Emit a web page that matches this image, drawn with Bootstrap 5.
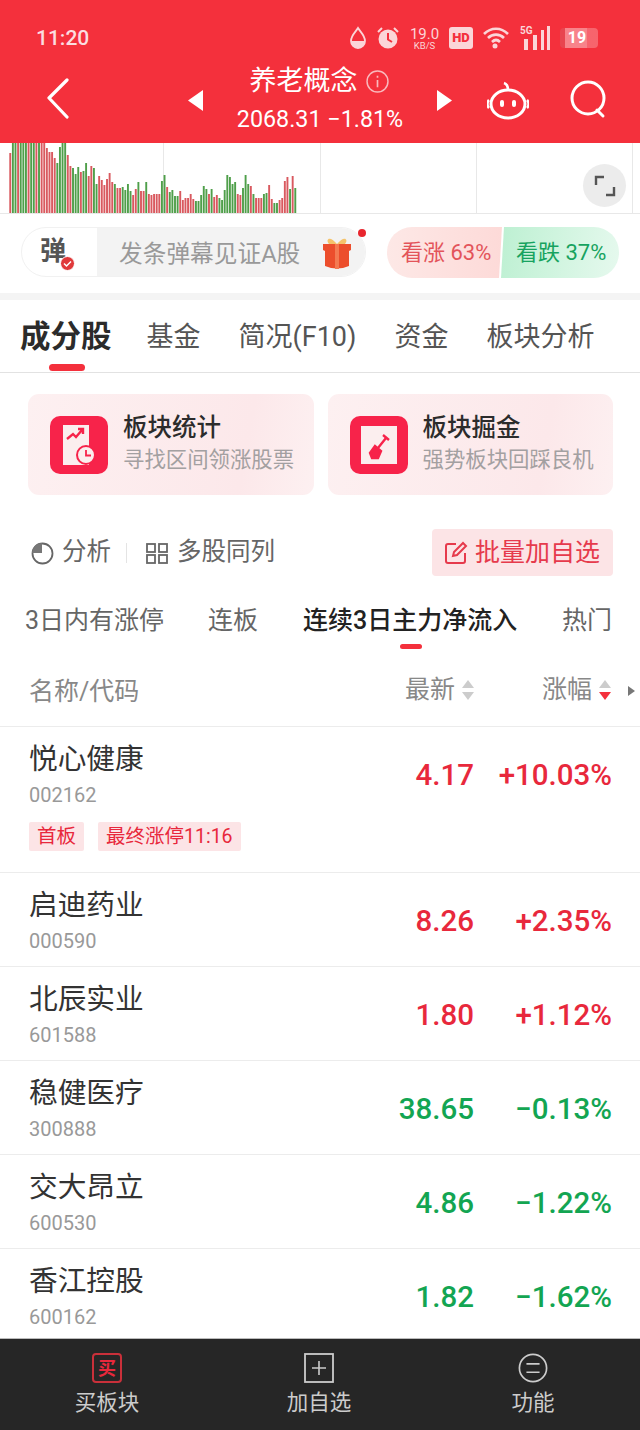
<!DOCTYPE html>
<html lang="zh"><head><meta charset="utf-8">
<link href="https://cdn.jsdelivr.net/npm/bootstrap@5.3.0/dist/css/bootstrap.min.css" rel="stylesheet">
<style>
html,body{width:640px;height:1430px;overflow:hidden;background:#fff}
body{font-family:Roboto,"Noto Sans CJK SC",sans-serif;color:#222}
.shell{width:640px;height:1430px;position:relative}
.topbar{background:#f4303c;height:143px;color:#fff}
.stat{height:62px;padding:14px 42px 0 36px}
.clock{font-size:21px;font-weight:500;color:#fbdde0;line-height:48px}
.stat-ic{gap:9px;color:#fbd5d8;height:48px}
.netsp{font-size:15px;line-height:13px;text-align:center;width:31px;color:#fbd5d8;margin-top:1px}
.netsp small{display:block;font-size:9.500px;line-height:9px}
.hd{background:#fbd5d8;color:#f4303c;font-size:13px;font-weight:900;border-radius:3px;width:24px;height:22px;line-height:22px;text-align:center}
.batt{width:38px;height:20px;border-radius:4px;background:linear-gradient(90deg,#e8454f 12%,rgba(255,255,255,.4) 12%,rgba(255,255,255,.4) 70%,rgba(255,255,255,.25) 70%);font-size:16px;font-weight:700;text-align:center;line-height:20px;color:#fff;padding-right:4px}
.nav-line{height:81px;padding:0 30px 0 46px}
.ctitle{width:232px}
.ctitle-a{font-size:27px;line-height:34px;height:34px;margin-top:2px;padding-right:2px}
.ctitle-b{font-size:23.300px;line-height:32px;margin-top:5px;white-space:nowrap}
.chartbox{height:71px;border-bottom:1px solid #e8e8e8;overflow:hidden;position:relative}
.fsbtn{position:absolute;left:583px;top:21px;width:43px;height:43px;border-radius:50%;background:#ececec}
.dan{height:79px;padding:13px 21px 0 21px}
.danbox{width:345px;height:50px;border-radius:25px;border:1px solid #f1f1f1;position:relative;background:#fff}
.dan-l{width:75px;font-size:26px;font-weight:700;color:#555;padding-left:18px;line-height:46px;position:relative}
.dan-r{flex:1;background:#f3f3f3;border-radius:0 25px 25px 0;color:#999;font-size:23.700px;padding-left:22px;line-height:52px;white-space:nowrap}
.dotred{position:absolute;left:336px;top:1px;width:8px;height:8px;border-radius:50%;background:#e8262e}
.gift{position:absolute;left:299px;top:7px}
.votebox{width:232px;height:51px;margin-left:21px;border-radius:25px;overflow:hidden;font-size:22px;line-height:51px;white-space:nowrap}
.vote-up{background:linear-gradient(90deg,#fde8e6,#fddad8);color:#e3545a;width:115px;padding-left:14px;clip-path:polygon(0 0,100% 0,calc(100% - 3px) 100%,0 100%)}
.vote-dn{background:linear-gradient(100deg,#bdf0d2,#e6f9ee);color:#17a35f;flex:1;padding-left:15px;margin-left:-1px;clip-path:polygon(3px 0,100% 0,100% 100%,0 100%)}
.thick{height:7px;background:#f4f4f4}
.tabs{height:73px;border-bottom:1px solid #e2e2e2;padding-left:20px;position:relative;white-space:nowrap;overflow:hidden}
.tb{font-size:27px;color:#555;line-height:74px;margin-right:38px}
.tb.on{font-size:30.500px;font-weight:700;color:#2b2b2b;margin-right:35px}
.tb.fade{color:#e2e2e2;margin-right:0}
.tabmark{position:absolute;left:49px;top:64px;width:36px;height:7px;border-radius:4px;background:#f4303c}
.cards{padding:21px 27px 0 28px;gap:14px}
.promo{flex:1;height:101px;border-radius:11px;background:linear-gradient(100deg,#fdf0f1,#fce8ea 75%,#fdf0f1);padding:22px 0 0 22px;gap:15px}
.promo-ic{width:58px;height:58px;border-radius:10px;background:#f7234a;display:flex;align-items:center;justify-content:center}
.promo-t{font-size:24.500px;line-height:28px;color:#2c2c2c;font-weight:500;white-space:nowrap;margin-top:-2px}
.promo-s{font-size:21.400px;line-height:28px;color:#a3a0a1;margin-top:4px;white-space:nowrap}
.tools{height:47px;margin-top:34px;padding:0 27px 0 30px;font-size:24.500px;color:#666}
.tools-sep{width:1px;height:20px;background:#e4e4e4;margin:0 18px 0 15px}
.addbtn{height:47px;width:181px;background:#fce4e6;border-radius:4px;color:#e63a4c;font-size:25px;padding-left:11px;gap:6px;white-space:nowrap}
.sub{height:60px;position:relative;font-size:25px;color:#666;white-space:nowrap;margin-top:15px;line-height:60px}
.sub span{position:absolute;top:0}
.submark{position:absolute;left:400px;top:53px;width:22px;height:5px;border-radius:3px;background:#f4303c}
.thd{height:76px;padding:6px 8px 0 29px;border-bottom:1px solid #ececec;color:#888;font-size:25px;position:relative}
.rw{padding:0 28px 0 29px;border-bottom:1px solid #ececec;height:94px;position:relative}
.rw.tall{height:146px}
.rw-a{font-size:28.700px;line-height:40px;color:#333;padding-top:12px;height:52px}
.rw-b{font-size:20px;line-height:24px;color:#999;margin-top:4px}
.vals{position:absolute;right:28px;top:1px;height:94px;font-size:29.500px;font-weight:500;display:flex;align-items:center;white-space:nowrap}
.pv{width:100px;text-align:right;margin-right:24px}
.cv{width:114px;text-align:right}
.up{color:#e8283c}.dn{color:#13a552}
.tags{gap:14px;margin-top:15px}
.tg{background:#fce4e6;color:#e8283c;font-size:19.500px;height:29px;line-height:29px;padding:0 8px;border-radius:2px}
.list{height:612px;overflow:hidden}
.foot{height:92px;background:#262626;border-top:1px solid #bbb;color:#ccc;font-size:21.500px;position:absolute;left:0;top:1338px;width:640px}
.foot-i{position:absolute;top:0;width:120px;text-align:center}
.foot-i svg{display:block;margin:14px auto 0;height:30px}
.foot-i div{line-height:30px;margin-top:5px}
</style></head>
<body><div class="shell">
<div class="topbar">
 <div class="stat d-flex justify-content-between align-items-start">
  <div class="clock">11:20</div>
  <div class="stat-ic d-flex align-items-center">
   <svg width="18" height="24" viewBox="0 0 17 24"><path d="M8.500 2C6 6 1.500 9.500 1.500 15a7 7 0 0 0 14 0C15.500 9.500 11 6 8.500 2z" fill="none" stroke="#fbd5d8" stroke-width="1.800"/><path d="M1.500 15h14a7 7 0 0 1-14 0z" fill="#fbd5d8"/></svg>
   <svg width="24" height="24" viewBox="0 0 24 24"><circle cx="12" cy="13" r="9.500" fill="#fbd5d8"/><path d="M12 7v6.500l4 2.500" fill="none" stroke="#f4303c" stroke-width="2"/><path d="M2 6l4-4M22 6l-4-4" stroke="#fbd5d8" stroke-width="2"/></svg>
   <div class="netsp">19.0<small>KB/S</small></div>
   <div class="hd">HD</div>
   <svg width="28" height="24" viewBox="0 0 28 24"><path d="M2 8c7-7 17-7 24 0M6 12c4.500-4.500 11.500-4.500 16 0M10 16c2.500-2.500 5.500-2.500 8 0" fill="none" stroke="#fbd5d8" stroke-width="2.600"/><circle cx="13" cy="20" r="2.500" fill="#fbd5d8"/></svg>
   <svg width="32" height="26" viewBox="0 0 30 26"><text x="0" y="9" font-size="10" font-weight="700" fill="#fbd5d8" font-family="Roboto">5G</text><path d="M4 14h4v11H4zM13 10h4v15h-4zM21 5h3v20h-3zM27 1h3v24h-3z" fill="#fbd5d8"/></svg>
   <div class="batt">19</div>
  </div>
 </div>
 <div class="nav-line d-flex align-items-start">
  <svg width="24" height="42" viewBox="0 0 24 42" class="mt-3"><path d="M21 2L3 20l18 19" fill="none" stroke="#fff" stroke-width="3.200" stroke-linecap="round" stroke-linejoin="round"/></svg>
  <svg width="16" height="22" viewBox="0 0 16 22" style="margin:28px 0 0 118px"><path d="M15 0v21L0 10.500z" fill="#fff"/></svg>
  <div class="ctitle text-center">
   <div class="ctitle-a d-flex justify-content-center align-items-center gap-2"><span>养老概念</span>
    <svg width="23" height="23" viewBox="0 0 22 22"><circle cx="11" cy="11" r="10" fill="none" stroke="#f9b9bd" stroke-width="1.400"/><path d="M11 9.500v7M11 5.500v2" stroke="#f9b9bd" stroke-width="1.600"/></svg></div>
   <div class="ctitle-b">2068.31 −1.81%</div>
  </div>
  <svg width="16" height="22" viewBox="0 0 16 22" style="margin-top:28px"><path d="M1 0v21l15-10.500z" fill="#fff"/></svg>
  <svg width="42" height="40" viewBox="0 0 42 40" style="margin:18px 0 0 35px"><ellipse cx="21" cy="24" rx="17" ry="14" fill="none" stroke="#fff" stroke-width="3"/><path d="M2 20a4 5 0 0 0 0 8M40 20a4 5 0 0 1 0 8M21 10c0-3-1-6-4-7" fill="none" stroke="#fff" stroke-width="2.600"/><rect x="13" y="20" width="4" height="7" rx="2" fill="#fff"/><rect x="25" y="20" width="4" height="7" rx="2" fill="#fff"/></svg>
  <svg width="38" height="40" viewBox="0 0 38 40" style="margin:18px 0 0 41px"><circle cx="18" cy="18" r="16" fill="none" stroke="#fff" stroke-width="3"/><path d="M27 30l6 6" stroke="#fff" stroke-width="3" stroke-linecap="round"/></svg>
 </div>
</div>
<div class="chartbox">
 <svg id="vol" width="640" height="71" viewBox="0 0 640 71" class="d-block"></svg>
 <div class="fsbtn d-flex align-items-center justify-content-center"><svg width="24" height="24" viewBox="0 0 24 24"><path d="M11 3H3v8M13 21h8v-8" fill="none" stroke="#555" stroke-width="2.400"/></svg></div>
</div>
<div class="dan d-flex">
 <div class="danbox d-flex">
  <div class="dan-l">弹<svg width="15" height="15" viewBox="0 0 15 15" class="position-absolute" style="left:38px;top:28px"><circle cx="7.500" cy="7.500" r="7" fill="#e0393a" stroke="#fff"/><path d="M4 7.500l2.500 2.500 4.500-4.500" fill="none" stroke="#fff" stroke-width="1.500"/></svg></div>
  <div class="dan-r">发条弹幕见证A股</div>
  <svg class="gift" width="32" height="36" viewBox="0 0 32 36"><path d="M16 9C9 0 4 4 8 9zM16 9c7-9 12-5 8 0z" fill="#f5c36b"/><path d="M2 9h28v6l-2 1v15q-12 5-24 0V16l-2-1z" fill="#ec4e2c"/><path d="M14 9h4v25h-4z" fill="#f47a52"/></svg>
  <div class="dotred"></div>
 </div>
 <div class="votebox d-flex">
  <div class="vote-up">看涨 63%</div><div class="vote-dn">看跌 37%</div>
 </div>
</div>
<div class="thick"></div>
<div class="tabs d-flex">
 <span class="tb on">成分股</span><span class="tb">基金</span><span class="tb">简况(F10)</span><span class="tb">资金</span><span class="tb">板块分析</span><span class="tb fade">相</span>
 <div class="tabmark"></div>
</div>
<div class="cards d-flex">
 <div class="promo d-flex">
  <div class="promo-ic"><svg width="34" height="40" viewBox="0 0 34 40"><path d="M0 0h26v40H0z" fill="#fbeeee" transform="translate(1 0)"/><path d="M5 14l6-5 3 3 6-7M16 4h5v5" fill="none" stroke="#f7234a" stroke-width="2.400"/><circle cx="24" cy="30" r="9" fill="#fbeeee" stroke="#f7234a" stroke-width="2"/><path d="M24 25v5.500h5" fill="none" stroke="#f7234a" stroke-width="1.800"/></svg></div>
  <div><div class="promo-t">板块统计</div><div class="promo-s">寻找区间领涨股票</div></div>
 </div>
 <div class="promo d-flex">
  <div class="promo-ic"><svg width="36" height="38" viewBox="0 0 36 38"><path d="M0 0h36v38H0z" fill="#fbeeee"/><path d="M9 27l5-7 6 5-3 7-6 0zM17 22l8-10" fill="#f7234a" stroke="#f7234a" stroke-width="2.400"/><path d="M22 9l6 5" stroke="#f7234a" stroke-width="2.400"/></svg></div>
  <div><div class="promo-t">板块掘金</div><div class="promo-s">强势板块回踩良机</div></div>
 </div>
</div>
<div class="tools d-flex align-items-center justify-content-between">
 <div class="d-flex align-items-center">
  <svg width="24" height="24" viewBox="0 0 24 24" class="me-2"><circle cx="12.500" cy="12.500" r="10" fill="none" stroke="#666" stroke-width="1.800"/><path d="M12 2A10 10 0 0 0 2 12h10z" fill="#777"/></svg>
  <span>分析</span><span class="tools-sep"></span>
  <svg width="24" height="24" viewBox="0 0 24 24" class="me-2"><g fill="none" stroke="#666" stroke-width="1.800"><rect x="2" y="3" width="8" height="8"/><rect x="14" y="3" width="8" height="8"/><rect x="2" y="14" width="8" height="8"/><rect x="14" y="14" width="8" height="8"/></g></svg>
  <span>多股同列</span>
 </div>
 <div class="addbtn d-flex align-items-center">
  <svg width="26" height="26" viewBox="0 0 26 26"><path d="M13 4H5a2 2 0 0 0-2 2v15a2 2 0 0 0 2 2h15a2 2 0 0 0 2-2v-8M10 16l1-4 9-9 3 3-9 9z" fill="none" stroke="#e63a4c" stroke-width="2"/></svg>
  <span>批量加自选</span>
 </div>
</div>
<div class="sub">
 <span style="left:25px">3日内有涨停</span><span style="left:208px">连板</span><span style="left:303px;color:#222;font-weight:500">连续3日主力净流入</span><span style="left:562px">热门</span>
 <div class="submark"></div>
</div>
<div class="thd d-flex align-items-center">
 <span>名称/代码</span>
 <span class="position-absolute" style="left:405px;top:20px">最新</span>
 <svg class="position-absolute" style="left:461px;top:28px" width="14" height="22" viewBox="0 0 14 22"><path d="M7 1l6 8H1zM7 21l6-8H1z" fill="#ccc"/></svg>
 <span class="position-absolute" style="left:542px;top:20px">涨幅</span>
 <svg class="position-absolute" style="left:598px;top:28px" width="14" height="22" viewBox="0 0 14 22"><path d="M7 1l6 8H1z" fill="#ccc"/><path d="M7 21l6-8H1z" fill="#f4303c"/></svg>
 <svg class="position-absolute" style="left:627px;top:34px" width="9" height="12" viewBox="0 0 9 12"><path d="M1 1l7 5-7 5z" fill="#777"/></svg>
</div>
<div class="list">
 <div class="rw tall"><div class="rw-a">悦心健康</div><div class="rw-b">002162</div>
  <div class="tags d-flex"><span class="tg">首板</span><span class="tg">最终涨停11:16</span></div>
  <div class="vals up"><span class="pv">4.17</span><span class="cv">+10.03%</span></div></div>
 <div class="rw"><div class="rw-a">启迪药业</div><div class="rw-b">000590</div><div class="vals up"><span class="pv">8.26</span><span class="cv">+2.35%</span></div></div>
 <div class="rw"><div class="rw-a">北辰实业</div><div class="rw-b">601588</div><div class="vals up"><span class="pv">1.80</span><span class="cv">+1.12%</span></div></div>
 <div class="rw"><div class="rw-a">稳健医疗</div><div class="rw-b">300888</div><div class="vals dn"><span class="pv">38.65</span><span class="cv">−0.13%</span></div></div>
 <div class="rw"><div class="rw-a">交大昂立</div><div class="rw-b">600530</div><div class="vals dn"><span class="pv">4.86</span><span class="cv">−1.22%</span></div></div>
 <div class="rw"><div class="rw-a">香江控股</div><div class="rw-b">600162</div><div class="vals dn"><span class="pv">1.82</span><span class="cv">−1.62%</span></div></div>
</div>
<div class="foot">
 <div class="foot-i" style="left:47px"><svg width="30" height="30" viewBox="0 0 30 30"><rect x="1" y="1" width="28" height="28" rx="3" fill="none" stroke="#c9303a" stroke-width="2"/><text x="15" y="22" text-anchor="middle" font-size="18" font-weight="700" fill="#e8283c" font-family="Noto Sans CJK SC">买</text></svg><div>买板块</div></div>
 <div class="foot-i" style="left:259px"><svg width="30" height="30" viewBox="0 0 30 30"><rect x="1" y="1" width="28" height="28" fill="none" stroke="#ccc" stroke-width="1.800"/><path d="M15 8v14M8 15h14" stroke="#ccc" stroke-width="1.600"/></svg><div>加自选</div></div>
 <div class="foot-i" style="left:473px"><svg width="32" height="32" viewBox="0 0 32 32"><circle cx="16" cy="16" r="14.500" fill="none" stroke="#ccc" stroke-width="1.800"/><path d="M9 11.500h14M9 20.500h14" stroke="#ccc" stroke-width="1.800"/></svg><div>功能</div></div>
</div>
</div>
<script>
var d="r61 g71 g71 r71 g71 g71 g71 r71 g71 g71 r71 g71 r71 r71 r66 r62 r62 r56 g51 g67 g71 g71 r59 r48 g46 g40 g47 r42 g43 g51 r38 r48 g46 g30 r38 r34 r29 r35 r41 r32 g30 r26 r26 g27 g24 g30 g23 r19 r25 g32 r23 r23 g32 r20 r19 r20 r20 r20 g33 g39 r27 g22 g24 g18 g18 r23 r14 r16 r16 r20 r15 g13 g13 g19 g28 g25 r20 g25 r17 r19 g16 g14 g24 g39 g37 g30 g32 r20 r19 g26 g39 g30 r28 g20 r16 r16 r16 g20 g21 r29 r15 g11 g11 r14 r16 r33 r37 g25 r38 g26".split(" ");
var s='';[163.5,320.5,476.5,632.5].forEach(function(x){s+='<path d="M'+x+' 0V71" stroke="#e8e8e8"/>'});
d.forEach(function(v,i){var h=+v.slice(1);s+='<rect x="'+(9.3+i*2.615).toFixed(2)+'" y="'+(71-h)+'" width="1.900" height="'+h+'" fill="'+(v[0]=='r'?'#d9595f':'#4f9f4a')+'"/>'});
document.getElementById('vol').innerHTML=s;
</script>
<script src="https://cdn.jsdelivr.net/npm/bootstrap@5.3.0/dist/js/bootstrap.bundle.min.js"></script>
</body></html>
